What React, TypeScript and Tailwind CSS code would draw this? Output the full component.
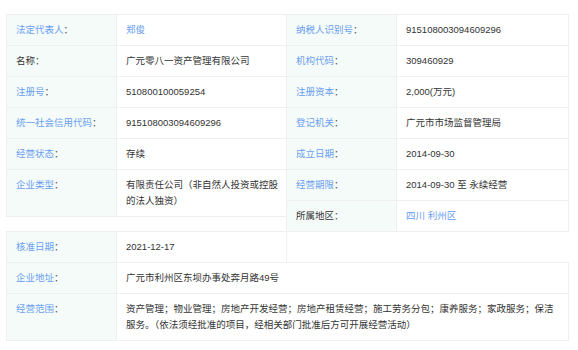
import React from "react";

type RowProps = {
  label: string;
  value: React.ReactNode;
  blueLabel?: boolean;
  blueValue?: boolean;
  first?: boolean;
  valuePad?: string;
};

function Row({
  label,
  value,
  blueLabel = true,
  blueValue = false,
  first = false,
  valuePad = "pr-[5px]",
}: RowProps) {
  return (
    <div className={`flex border-b border-[#efefef] ${first ? "border-t" : ""}`}>
      <div className="w-[109px] shrink-0 bg-[#f5fbf9] pl-[9px] pr-[4px] py-[7px] leading-[16px]">
        <span className={blueLabel ? "text-[#6a9ef2]" : "text-[#333]"}>{label}</span>
        <span className="text-[#555]">：</span>
      </div>
      <div
        className={`flex-1 border-l border-[#efefef] pl-[9px] ${valuePad} py-[7px] leading-[16px] ${
          blueValue ? "text-[#6a9ef2]" : "text-[#333]"
        }`}
      >
        {value}
      </div>
    </div>
  );
}

export default function App() {
  return (
    <div className="w-[578px] h-[350px] bg-white pl-[6px] pt-[14px] text-[9.5px] font-['Liberation_Sans','Noto_Sans_CJK_SC',sans-serif]">
      <div className="w-[563px]">
        {/* two columns */}
        <div className="flex items-start">
          <div className="w-[281px] border-l border-r border-[#efefef]">
            <Row first label="法定代表人" value="郑俊" blueValue />
            <Row label="名称" value="广元零八一资产管理有限公司" blueLabel={false} />
            <Row label="注册号" value="510800100059254" />
            <Row label="统一社会信用代码" value="915108003094609296" />
            <Row label="经营状态" value="存续" />
            <Row label="企业类型" value="有限责任公司（非自然人投资或控股的法人独资）" />
          </div>
          <div className="w-[283px] -ml-px border-l border-r border-[#efefef]">
            <Row first label="纳税人识别号" value="915108003094609296" />
            <Row label="机构代码" value="309460929" />
            <Row label="注册资本" value="2,000(万元)" />
            <Row label="登记机关" value="广元市市场监督管理局" />
            <Row label="成立日期" value="2014-09-30" />
            <Row label="经营期限" value="2014-09-30 至 永续经营" />
            <Row label="所属地区" value="四川 利州区" blueLabel={false} blueValue />
          </div>
        </div>

        {/* approval date, left half */}
        <div className="w-[281px] -mt-px border-l border-r border-[#efefef]">
          <Row first label="核准日期" value="2021-12-17" />
        </div>

        {/* full width rows */}
        <div className="-mt-px border-l border-r border-[#efefef]">
          <Row first label="企业地址" value="广元市利州区东坝办事处奔月路49号" />
          <Row
            label="经营范围"
            valuePad="pr-[11px]"
            value="资产管理；物业管理；房地产开发经营；房地产租赁经营；施工劳务分包；康养服务；家政服务；保洁服务。（依法须经批准的项目，经相关部门批准后方可开展经营活动）"
          />
        </div>
      </div>
    </div>
  );
}
